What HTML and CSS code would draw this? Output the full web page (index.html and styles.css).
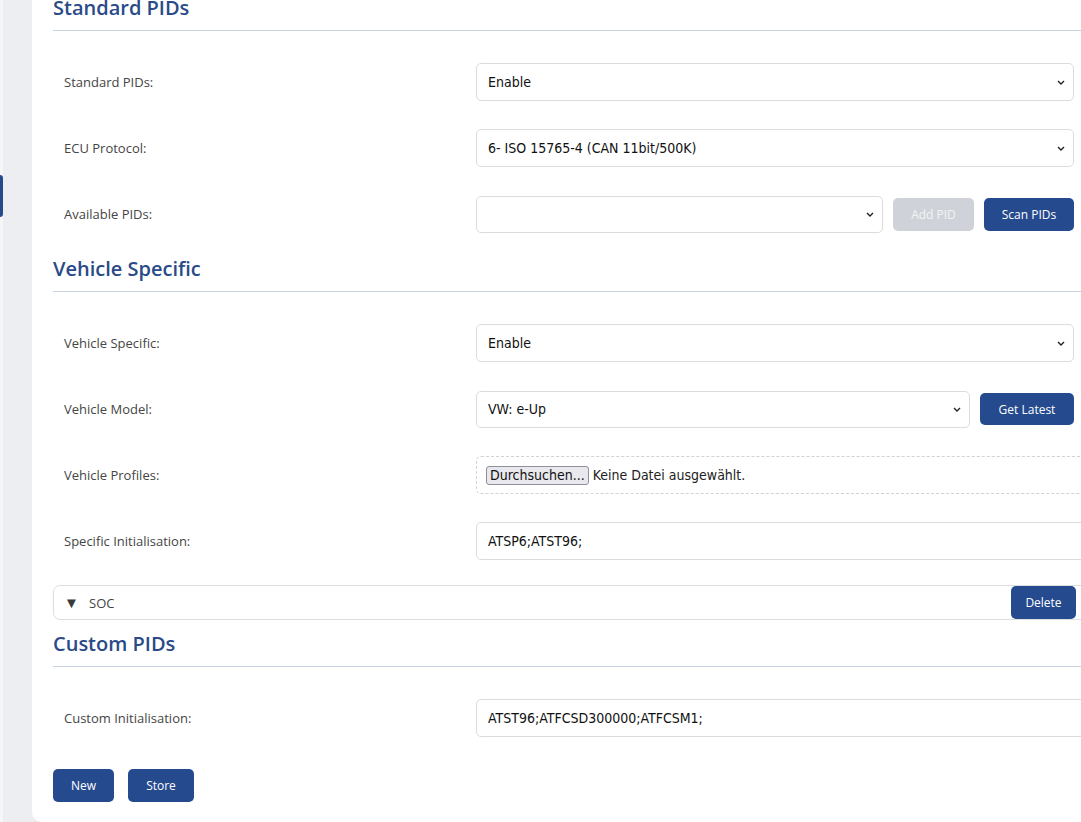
FILE: index.html
```html
<!DOCTYPE html>
<html>
<head>
<meta charset="utf-8">
<link rel="stylesheet" href="styles.css">
</head>
<body>
<div class="layout">
  <aside class="sidebar"><div class="tab"></div></aside>
  <main class="card">
    <h2 class="section-title first">Standard PIDs</h2>
    <div class="row">
      <label class="label">Standard PIDs:</label>
      <div class="field">
        <div class="select short"><span>Enable</span><svg class="chev" viewBox="0 0 8 5"><path d="M1 1l3 3 3-3"/></svg></div>
      </div>
    </div>
    <div class="row">
      <label class="label">ECU Protocol:</label>
      <div class="field">
        <div class="select short"><span>6- ISO 15765-4 (CAN 11bit/500K)</span><svg class="chev" viewBox="0 0 8 5"><path d="M1 1l3 3 3-3"/></svg></div>
      </div>
    </div>
    <div class="row">
      <label class="label">Available PIDs:</label>
      <div class="field combo">
        <div class="select grow"><span></span><svg class="chev" viewBox="0 0 8 5"><path d="M1 1l3 3 3-3"/></svg></div>
        <button class="btn disabled w80">Add PID</button>
        <button class="btn w90">Scan PIDs</button>
      </div>
    </div>

    <h2 class="section-title">Vehicle Specific</h2>
    <div class="row">
      <label class="label">Vehicle Specific:</label>
      <div class="field">
        <div class="select short"><span>Enable</span><svg class="chev" viewBox="0 0 8 5"><path d="M1 1l3 3 3-3"/></svg></div>
      </div>
    </div>
    <div class="row">
      <label class="label">Vehicle Model:</label>
      <div class="field combo">
        <div class="select grow"><span>VW: e-Up</span><svg class="chev" viewBox="0 0 8 5"><path d="M1 1l3 3 3-3"/></svg></div>
        <button class="btn w94">Get Latest</button>
      </div>
    </div>
    <div class="row">
      <label class="label">Vehicle Profiles:</label>
      <div class="field">
        <div class="file"><span class="file-btn">Durchsuchen...</span><span class="file-text">Keine Datei ausgewählt.</span></div>
      </div>
    </div>
    <div class="row">
      <label class="label">Specific Initialisation:</label>
      <div class="field">
        <div class="input">ATSP6;ATST96;</div>
      </div>
    </div>
    <div class="details">
      <span class="tri">&#9660;</span><span class="summary">SOC</span>
      <button class="btn delete">Delete</button>
    </div>

    <h2 class="section-title mid">Custom PIDs</h2>
    <div class="row">
      <label class="label">Custom Initialisation:</label>
      <div class="field">
        <div class="input">ATST96;ATFCSD300000;ATFCSM1;</div>
      </div>
    </div>
    <div class="actions">
      <button class="btn w61">New</button>
      <button class="btn w66">Store</button>
    </div>
  </main>
</div>
</body>
</html>
```
FILE: styles.css
```css
html, body {
  margin: 0;
  padding: 0;
  background: #eceef2;
  overflow: hidden;
  width: 1081px;
  height: 822px;
}
.layout {
  display: flex;
  width: 1120px;
  height: 822px;
}
.sidebar {
  width: 32px;
  flex: none;
  background: linear-gradient(to right, #f5f6f8 0 3px, #eceef2 3px);
  position: relative;
}
.tab {
  position: absolute;
  left: 0;
  top: 175px;
  width: 3px;
  height: 42px;
  background: #254a8e;
  border-radius: 0 3px 3px 0;
}
.card {
  flex: none;
  width: 1067px;
  background: #fff;
  border-radius: 0 0 0 10px;
  margin-top: -5px;
  padding: 0 0 20px 21px;
  box-sizing: border-box;
  height: 827px;
  font-family: "Open Sans", "Noto Sans", sans-serif;
}
.section-title {
  margin: 9px 0 18px 0;
  font-family: "Open Sans", sans-serif;
  font-weight: 600;
  font-size: 20px;
  line-height: 26px;
  color: #2a4a88;
  padding-bottom: 9px;
  border-bottom: 1px solid #c9d3e2;
}
.section-title.first { margin-top: 0; }
.section-title.mid { margin-top: 11px; }
.row {
  display: grid;
  grid-template-columns: 423px 1fr;
  align-items: center;
  padding: 14px 0;
  height: 38px;
}
.label {
  padding-left: 11px;
  font-size: 13px;
  color: #454545;
}
.field {
  display: flex;
  align-items: center;
}
.select, .input, .file {
  height: 38px;
  box-sizing: border-box;
  border: 1px solid #dcdcdc;
  border-radius: 5px;
  display: flex;
  align-items: center;
  padding-left: 11px;
  font-family: "DejaVu Sans Condensed", "Liberation Sans", sans-serif;
  font-size: 14px;
  color: #111;
  background: #fff;
}
.select {
  position: relative;
}
.select.short { width: 598px; }
.select.grow { flex: 1; height: 37px; }
.chev {
  position: absolute;
  right: 8px;
  top: 50%;
  width: 8px;
  height: 5px;
  margin-top: -2px;
  fill: none;
  stroke: #222;
  stroke-width: 1.4;
}
.combo {
  width: 598px;
  gap: 10px;
}
.input { width: 100%; }
.file {
  width: 100%;
  border: 1px dashed #d2d2d2;
  padding-left: 9px;
}
.file-btn {
  display: inline-block;
  background: #e9e9ed;
  border: 1px solid #8f8f9d;
  border-radius: 3px;
  padding: 0 3px;
  line-height: 17px;
  font-size: 14px;
  color: #111;
}
.file-text {
  margin-left: 4px;
  color: #222;
}
.btn {
  height: 33px;
  border: none;
  border-radius: 5px;
  background: #254a8e;
  color: #fff;
  font-family: "Open Sans", sans-serif;
  font-size: 12px;
  padding: 0;
  flex: none;
}
.btn.disabled {
  background: #cfd3d9;
  color: #f2f3f5;
}
.w80 { width: 81px; }
.w90 { width: 90px; }
.w94 { width: 94px; height: 32px; }
.w61 { width: 61px; }
.w66 { width: 66px; }
.details {
  display: flex;
  align-items: center;
  height: 35px;
  box-sizing: border-box;
  border: 1px solid #dedede;
  border-radius: 7px;
  margin-top: 11px;
  width: 1060px;
  font-size: 13px;
  color: #444;
}
.tri {
  margin-left: 10px;
  font-size: 15px;
  line-height: 15px;
  color: #3a3a3a;
  width: 25px;
}
.summary {
  flex: 1;
}
.btn.delete {
  width: 65px;
  margin-right: 36px;
  height: 33px;
}
.actions {
  display: flex;
  gap: 14px;
  margin-top: 18px;
}
```
